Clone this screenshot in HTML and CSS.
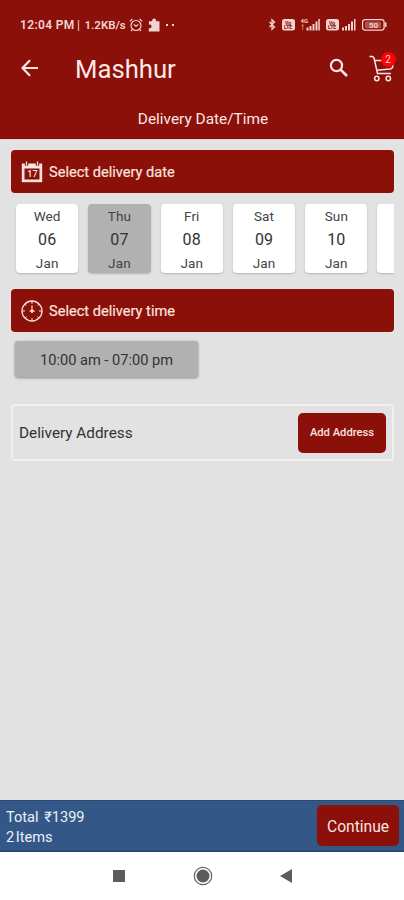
FILE: index.html
```html
<!DOCTYPE html>
<html lang="en">
<head>
<meta charset="utf-8">
<title>Mashhur</title>
<link rel="stylesheet" href="styles.css">
</head>
<body>
<div class="app">
  <header class="header">
    <div class="status">
      <span class="clock">12:04 PM</span><span class="divider">|</span><span class="rate">1.2KB/s</span>
      <svg class="alarm" width="14" height="14" viewBox="0 0 14 14" fill="none" stroke="currentColor" stroke-width="1.2"><circle cx="7" cy="7.5" r="5"/><path d="M4.700 6.500 7 8.300l2.400-1.800M.8 3.400 3.400 1M13.200 3.400 10.600 1M3.200 11.600 2 13M10.800 11.600 12 13"/></svg>
      <svg class="puzzle" width="13" height="14" viewBox="0 0 13 14" fill="currentColor"><path d="M1 3.200h3.200a2 2 0 1 1 3.800 0h3.500v10.300H.8V10a1.900 1.900 0 1 0 0-3.400z"/></svg>
      <span class="dots"><i></i><i></i></span>
      <svg class="signals" width="121" height="16" viewBox="0 0 121 16">
        <path d="m1.500 5 5 5-2.500 2.200V2.800L6.500 5l-5 5" fill="none" stroke="currentColor" stroke-width="1.300"/>
        <g fill="currentColor"><rect x="14" y="2" width="13" height="11.500" rx="2.500"/><rect x="58" y="2" width="13" height="11.500" rx="2.500"/>
        <path d="M38.500 13.500v-3h2v3zM41.500 13.500V9h2v4.500zM44.500 13.500V7h2v6.500zM47.500 13.500V4.500h2v9zM50.300 13.500V2h1.500v11.500zM74 13.500v-3h2v3zM77 13.500V9h2v4.500zM80 13.500V7h2v6.500zM83 13.500V4.500h2v9zM86 13.500V2h1.500v11.500zM117 5.500h1.500v4.500H117z"/></g>
        <g class="volte"><text x="17" y="7.500">Vo</text><text x="16" y="12.200">LTE</text><text x="61" y="7.500">Vo</text><text x="60" y="12.200">LTE</text></g>
        <text class="network" x="32.500" y="5.500">4G</text>
        <path d="m33.500 9 1.200-1.600L35.900 9M34.700 8v5" fill="none" stroke="#d98545" stroke-width=".9"/>
        <rect x="94.600" y="2.600" width="21.500" height="10.500" rx="2.500" fill="none" stroke="currentColor" stroke-width="1.300"/>
        <rect x="97" y="4.500" width="16" height="6.700" rx="1" fill="currentColor" opacity=".35"/>
        <text class="battery" x="101" y="10.700">50</text>
      </svg>
    </div>
    <div class="toolbar">
      <svg class="back" width="18" height="18" viewBox="0 0 18 18" fill="none" stroke="currentColor" stroke-width="2.200"><path d="M17 9H2M9 1.200 1.500 9 9 16.800"/></svg>
      <h1>Mashhur</h1>
      <svg class="search" width="20" height="20" viewBox="0 0 20 20" fill="none" stroke="currentColor"><circle cx="7.500" cy="7.500" r="5.600" stroke-width="2.200"/><path d="m11.600 11.600 6.400 6.400" stroke-width="2.700"/></svg>
      <div class="cart">
        <svg width="26" height="28" viewBox="0 0 26 28" fill="none" stroke="currentColor" stroke-width="1.500"><path d="M.5 1.500h3l1.500 1.500 3.500 15.500H22M5.500 5.500h19l-1 7-2 1.500-14 1.200"/><circle cx="7.800" cy="23.500" r="2.200"/><circle cx="19.300" cy="23.500" r="2.200"/></svg>
        <span class="badge">2</span>
      </div>
    </div>
    <div class="subtitle">Delivery Date/Time</div>
  </header>
  <main>
    <section class="bar">
      <svg width="22" height="22" viewBox="0 0 22 22"><path d="M.8 2.500h20.400v18.700H.8z" fill="currentColor"/><path d="M3.500 7.500h15v11h-15z" fill="#8a1009"/><path d="M5.500 0v4.500M16.500 0v4.500" stroke="#8a1009" stroke-width="3.500"/><path d="M5.500.5V4M16.500.5V4" stroke="currentColor" stroke-width="1.300"/><text class="day17" x="6.300" y="16">17</text></svg>
      Select delivery date
    </section>
    <div class="dates">
      <div class="date"><span>Wed</span><b>06</b><span>Jan</span></div>
      <div class="date selected"><span>Thu</span><b>07</b><span>Jan</span></div>
      <div class="date"><span>Fri</span><b>08</b><span>Jan</span></div>
      <div class="date"><span>Sat</span><b>09</b><span>Jan</span></div>
      <div class="date"><span>Sun</span><b>10</b><span>Jan</span></div>
      <div class="date"></div>
    </div>
    <section class="bar">
      <svg width="22" height="22" viewBox="0 0 22 22" fill="none" stroke="currentColor"><circle cx="11" cy="11" r="10" stroke-width="1.300"/><path d="M11 5.500V13M8.500 11H14" stroke-width="1.200"/><circle cx="11" cy="11" r="1.600" fill="currentColor" stroke="none"/><path d="M11 1v3M11 18v3M1 11h3M18 11h3M4 4l1.500 1.500M18 4l-1.500 1.500M4 18l1.500-1.500M18 18l-1.500-1.500" stroke-width="1"/></svg>
      Select delivery time
    </section>
    <div class="slot">10:00 am - 07:00 pm</div>
    <div class="address"><span>Delivery Address</span><button class="add">Add Address</button></div>
  </main>
  <footer class="footer">
    <div class="total"><div>Total <span class="price">₹1399</span></div><div class="items">2 Items</div></div>
    <button class="continue">Continue</button>
  </footer>
  <nav class="nav">
    <svg width="12" height="12" viewBox="0 0 12 12"><path d="M0 0h12v12H0z" fill="#5c5c5c"/></svg>
    <svg width="20" height="20" viewBox="0 0 20 20"><circle cx="10" cy="10" r="8.700" fill="none" stroke="#666" stroke-width="1.200"/><circle cx="10" cy="10" r="6.500" fill="#5c5c5c"/></svg>
    <svg width="12" height="14" viewBox="0 0 12 14"><path d="M12 0v14L0 7z" fill="#5c5c5c"/></svg>
  </nav>
</div>
</body>
</html>
```
FILE: styles.css
```css
* { box-sizing: border-box; }
body { margin: 0; font-family: Roboto, "Liberation Sans", sans-serif; color: #333; }
svg { display: block; flex: none; }
button { font: inherit; border: 0; padding: 0; color: #fbe4e1; background: #8a1009; border-radius: 5px; }
.app { display: flex; flex-direction: column; width: 404px; height: 900px; overflow: hidden; background: #e2e2e2; }

.header { height: 140px; background: #8a1009; color: #fbe6e3; border-bottom: 1px solid #f3d0cd; box-shadow: inset 0 -1px #75100b; }
.status { display: flex; align-items: center; height: 30px; margin-top: 10px; padding-left: 20px; color: #f3d3cf; font-size: 12px; font-weight: 600; }
.clock { width: 57px; letter-spacing: .35px; }
.divider { width: 7.5px; font-weight: 400; }
.rate { width: 44px; font-size: 11.5px; }
.alarm { width: 14px; }
.puzzle { margin-left: 5px; }
.dots { display: flex; gap: 4px; margin-left: 5px; width: 102.500px; }
.dots i { width: 2px; height: 2px; background: currentColor; }
.volte { fill: #8a1009; font-size: 5px; font-weight: 800; }
.network { fill: currentColor; font-size: 6px; font-weight: 700; }
.battery { fill: currentColor; font-size: 8px; font-weight: 700; }

.toolbar { display: flex; align-items: center; height: 56px; padding-left: 21px; }
h1 { width: 253.500px; margin: 1px 0 0 36px; font-size: 25.700px; font-weight: 400; line-height: 32px; color: #fbe9e6; }
.search { margin-top: -1px; }
.cart { position: relative; margin: 1px 0 0 20px; }
.badge { position: absolute; left: 12px; top: -3px; width: 15px; height: 15px; border-radius: 50%; background: #f80505; color: #ffc9c9; font-size: 10px; line-height: 15px; text-align: center; }
.subtitle { padding-left: 2px; font-size: 15.400px; line-height: 47px; text-align: center; }

main { flex: 1; padding: 10px 10px 0 11px; }
.bar { display: flex; align-items: center; gap: 6px; height: 43px; padding: 1px 0 0 10px; border-radius: 4px; background: #8a1009; box-shadow: 0 0 0 1px #ebe4e3; color: #fae2df; font-size: 14.600px; -webkit-text-stroke: .2px; }
.day17 { fill: currentColor; font-size: 9px; font-weight: 500; }
.dates { display: flex; gap: 10px; height: 96px; padding: 11px 0 0 5px; overflow: hidden; }
.date { flex: none; display: flex; flex-direction: column; align-items: center; width: 62.300px; height: 69px; padding-top: 2px; border-radius: 4px; background: #fff; box-shadow: 0 1px 2px #0003; font-size: 13.500px; line-height: 20px; letter-spacing: .15px; color: #444; }
.date b { margin: 3px 0 3px; font-size: 16px; line-height: 21px; font-weight: 400; color: #333; }
.selected { background: #b1b1b1; }
.slot { width: 183px; height: 36px; margin: 9px 0 0 4px; border-radius: 3px; background: #b1b1b1; box-shadow: 0 1px 3px #0006; font-size: 14.600px; line-height: 38px; text-align: center; }
.address { display: flex; align-items: center; justify-content: space-between; height: 57px; margin-top: 27px; padding: 0 6px; border: 2px solid #f1f1f1; border-radius: 4px; font-size: 15.300px; }
.add { width: 88px; height: 40px; font-size: 11.200px; font-weight: 500; }

.footer { display: flex; justify-content: space-between; height: 52px; padding: 5px 5px 0 6px; background: #335786; box-shadow: inset 0 1px #284875, inset 0 -2px #284a79; color: #eaf1fa; font-size: 14.600px; }
.total { line-height: 20px; padding-top: 2px; }
.price { margin-left: 2px; }
.items { word-spacing: -2px; }
.continue { width: 82px; height: 41px; padding-top: 2px; font-size: 15.600px; }
.nav { display: flex; align-items: center; height: 48px; padding-left: 113px; gap: 67.500px; background: #fff; }
```
